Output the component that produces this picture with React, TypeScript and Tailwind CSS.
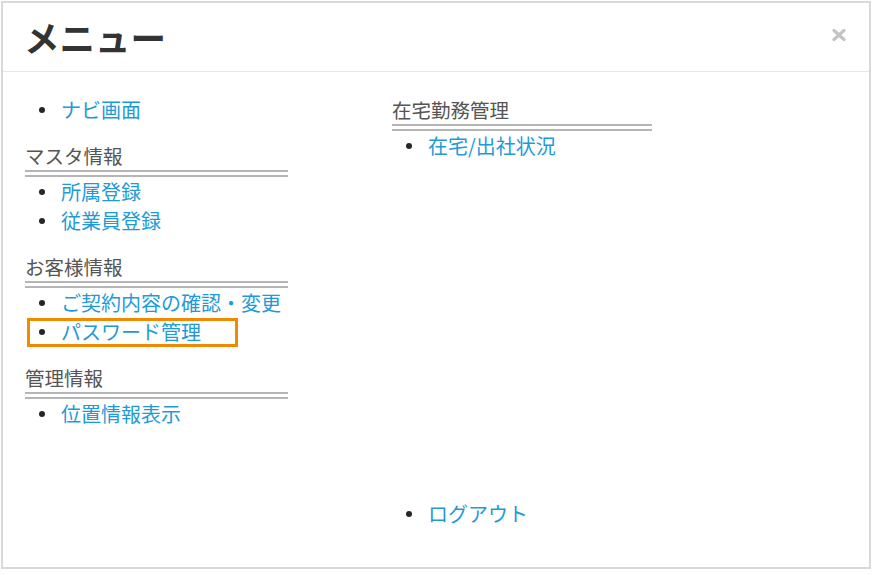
const font = "font-['Noto_Sans_CJK_JP','Liberation_Sans',sans-serif]";

function Item({ label, boxed }: { label: string; boxed?: boolean }) {
  return (
    <li className="relative flex items-center h-[29px]">
      <span className="ml-[14px] mr-[16px] w-[6px] h-[6px] rounded-full bg-[#262626]" />
      <a className="text-[20px] leading-[29px] text-[#1f9ad6] whitespace-nowrap">{label}</a>
      {boxed && (
        <span className="absolute left-[2px] top-[1px] w-[211px] h-[29px] border-[3px] border-[#f08a00]" />
      )}
    </li>
  );
}

function Rule({ width }: { width: string }) {
  return (
    <div className={`${width} flex flex-col gap-[3px]`}>
      <div className="h-[2px] bg-[#b5b5b5]" />
      <div className="h-[2px] bg-[#b5b5b5]" />
    </div>
  );
}

function Section({
  title,
  items,
  boxed,
  className = "",
  ruleWidth = "w-[263px]",
}: {
  title: string;
  items: string[];
  boxed?: string;
  className?: string;
  ruleWidth?: string;
}) {
  return (
    <div className={className}>
      <h3 className="text-[19.5px] leading-[29px] text-[#555]">{title}</h3>
      <Rule width={ruleWidth} />
      <ul>
        {items.map((it) => (
          <Item key={it} label={it} boxed={it === boxed} />
        ))}
      </ul>
    </div>
  );
}

export default function App() {
  return (
    <div className={`w-[878px] h-[575px] bg-white p-px ${font}`}>
      <div className="w-[870px] h-[568px] border-2 border-[#d9d9d9] flex flex-col">
        {/* header */}
        <div className="h-[69px] shrink-0 border-b border-[#e6e6e6] flex items-center justify-between pl-[21px] pr-[23px]">
          <h1 className="text-[35.5px] font-bold text-[#333] leading-none">メニュー</h1>
          <svg width="14" height="12" viewBox="0 0 14 12" className="mt-[-4px]">
            <path d="M2 1.5 L12 10.5 M12 1.5 L2 10.5" stroke="#c4c4c4" strokeWidth="3.2" strokeLinecap="round" />
          </svg>
        </div>

        {/* body */}
        <div className="flex-1 flex pl-[22px] pt-[23px] pb-[39px]">
          <div className="w-[367px] flex flex-col">
            <ul>
              <Item label="ナビ画面" />
            </ul>
            <Section className="mt-[17px]" title="マスタ情報" items={["所属登録", "従業員登録"]} />
            <Section className="mt-[17px]" title="お客様情報" items={["ご契約内容の確認・変更", "パスワード管理"]} boxed="パスワード管理" />
            <Section className="mt-[17px]" title="管理情報" items={["位置情報表示"]} />
          </div>
          <div className="flex flex-col">
            <Section title="在宅勤務管理" items={["在宅/出社状況"]} ruleWidth="w-[260px]" />
            <ul className="mt-auto">
              <Item label="ログアウト" />
            </ul>
          </div>
        </div>
      </div>
    </div>
  );
}
